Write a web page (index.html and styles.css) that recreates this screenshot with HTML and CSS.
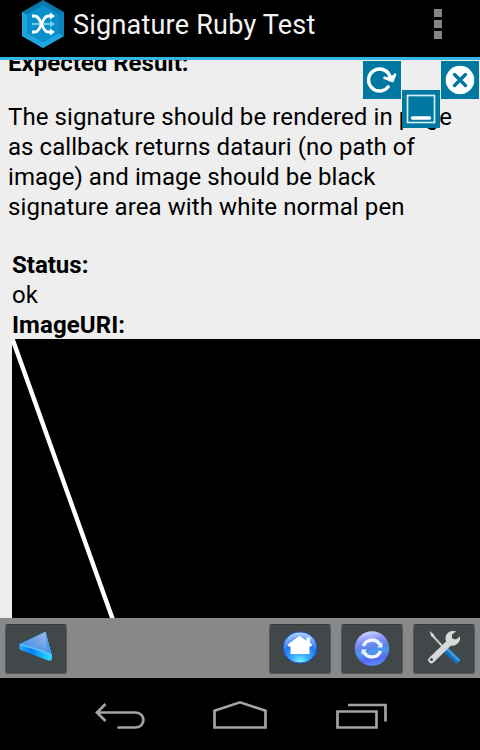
FILE: index.html
```html
<!DOCTYPE html>
<html lang="en">
<head>
<meta charset="utf-8">
<title>Signature Ruby Test</title>
<link rel="stylesheet" href="styles.css">
</head>
<body>
<div class="screen">
  <header class="action-bar">
    <svg class="app-icon" width="42" height="48" viewBox="0 0 42 48">
      <path d="M21 0L42 12V36L21 48L0 36V12Z" fill="#0878ab"/>
      <path d="M0 12L5 15V33L21 42L37 33L42 36L21 48L0 36Z" fill="#20a5df"/>
      <path d="M37 15L42 12V36L37 33Z" fill="#0b84b9"/>
      <path d="M21 5L37 14.500V33L21 42L5 33V14.500Z" fill="#0790c9"/>
      <path d="M10 24H29" stroke="#76c9e9" stroke-width="2.200"/>
      <path d="M28 20.500L33 24L28 27.500Z" fill="#76c9e9"/>
      <g fill="none" stroke="#fff" stroke-width="2.800">
        <path d="M10 16H13C19 16 20 32 26 32H30"/>
        <path d="M10 32H13C19 32 20 16 26 16H30"/>
      </g>
      <path d="M28 12.500L33 16L28 19.500ZM28 28.500L33 32L28 35.500Z" fill="#fff"/>
    </svg>
    <h1 class="title">Signature Ruby Test</h1>
    <div class="overflow"><i></i><i></i><i></i></div>
  </header>

  <main class="content">
    <div class="description">
      <div class="line bold expected">Expected Result:</div>
      <div class="line l1">The signature should be rendered in page</div>
      <div class="line l2">as callback returns datauri (no path of</div>
      <div class="line l3">image) and image should be black</div>
      <div class="line l4">signature area with white normal pen</div>
    </div>
    <div class="result">
      <div class="line bold status">Status:</div>
      <div class="line ok">ok</div>
      <div class="line bold uri">ImageURI:</div>
      <svg class="signature" width="468" height="279" viewBox="0 0 468 279">
        <rect width="468" height="279" fill="#000"/>
        <path d="M0.500 0L101 281" stroke="#fff" stroke-width="4.400"/>
      </svg>
    </div>
    <div class="float-btn refresh">
      <svg width="38" height="38" viewBox="0 0 38 38">
        <path d="M25.200 25.800A11 11 0 1 1 26.300 13.800L27.500 17" fill="none" stroke="#fff" stroke-width="3.400" stroke-linecap="round"/>
        <path d="M21.500 16.800L29.500 20L32 13.500Z" fill="#fff"/>
        <path d="M21.500 16.800L29.500 20L32 13.500" fill="none" stroke="#fff" stroke-width="2.600" stroke-linejoin="round" stroke-linecap="round"/>
      </svg>
    </div>
    <div class="float-btn close">
      <svg width="38" height="38" viewBox="0 0 38 38">
        <circle cx="19" cy="19" r="14.300" fill="#fff"/>
        <path d="M13.500 13.500L24.500 24.500M24.500 13.500L13.500 24.500" stroke="#0078a2" stroke-width="3.400" stroke-linecap="round"/>
      </svg>
    </div>
    <div class="float-btn minimize">
      <svg width="38" height="38" viewBox="0 0 38 38">
        <rect x="5.500" y="5.500" width="27" height="27" fill="none" stroke="#d5edf4" stroke-width="1.700"/>
        <path d="M10.500 28H27.500" stroke="#fff" stroke-width="3.500" stroke-linecap="round"/>
      </svg>
    </div>
  </main>

  <nav class="toolbar">
    <button class="tool back">
      <svg width="60" height="48" viewBox="0 0 60 48">
        <defs>
          <linearGradient id="face" x1="1" y1="0" x2="0" y2="1"><stop offset="0" stop-color="#b4b7ef"/><stop offset=".5" stop-color="#699fe4"/><stop offset="1" stop-color="#1289fa"/></linearGradient>
          <linearGradient id="edge"><stop offset="0" stop-color="#2baaff"/><stop offset=".35" stop-color="#087ff5"/><stop offset="1" stop-color="#25e2ff"/></linearGradient>
        </defs>
        <path d="M13.500 19L39.500 6.500L46 31L45.500 35.500L42 35.500L13.500 24.500Z" fill="url(#edge)"/>
        <path d="M14 19L39.500 7L45.500 30Z" fill="url(#face)"/>
        <path d="M39.500 7.500L45.500 30L41 28Z" fill="#249bf6" opacity=".7"/>
        <path d="M14.500 19.500L30 24L45.500 30" fill="none" stroke="#54c8ff" stroke-width="1.500"/>
      </svg>
    </button>
    <button class="tool home">
      <svg width="60" height="48" viewBox="0 0 60 48">
        <defs><radialGradient id="orb" cx=".5" cy=".95" r=".95"><stop offset="0" stop-color="#79f3ff"/><stop offset=".28" stop-color="#38acff"/><stop offset=".6" stop-color="#2474ee"/><stop offset="1" stop-color="#c2dcff"/></radialGradient></defs>
        <ellipse cx="30" cy="22.500" rx="16.800" ry="15.500" fill="url(#orb)" stroke="#1359d8"/>
        <path d="M29.500 11L42.500 19.500L41 21.500H39.500V29H20.500V21.500H18.500L17.500 19.500Z" fill="#fff"/>
        <path d="M36.500 12.500H40V19H36.500Z" fill="#fff"/>
      </svg>
    </button>
    <button class="tool">
      <svg width="60" height="48" viewBox="0 0 60 48">
        <defs><linearGradient id="sync" x1=".4" y1="0" x2=".6" y2="1"><stop offset="0" stop-color="#ccd2ff"/><stop offset=".28" stop-color="#8490f7"/><stop offset=".5" stop-color="#5484e8"/><stop offset=".6" stop-color="#4c9ceb"/><stop offset=".8" stop-color="#5468f3"/><stop offset="1" stop-color="#5a92ff"/></linearGradient></defs>
        <circle cx="30" cy="23.500" r="17.200" fill="url(#sync)"/>
        <g fill="none" stroke="#eef5ff" stroke-width="3.400"><path d="M21.500 21A9 9 0 0 1 38 20"/><path d="M38.500 26A9 9 0 0 1 22 27"/></g>
        <path d="M35 22.500H40.500V17.500ZM25 24.500H19.500V29.500Z" fill="#eef5ff"/>
      </svg>
    </button>
    <button class="tool">
      <svg width="60" height="48" viewBox="0 0 60 48">
        <path d="M17 9L31 24" stroke="#c7c9ca" stroke-width="2"/>
        <path d="M15.500 6L19.500 9L21 12.500L18 12Z" fill="#d8d8d8"/>
        <path d="M31 24L44.500 37" stroke="#166eb7" stroke-width="6"/>
        <path d="M32 23L45.500 36" stroke="#3a9be2" stroke-width="2.500"/>
        <path d="M35 18L17.500 35" stroke="#d9d9d9" stroke-width="6.500" stroke-linecap="round"/>
        <path d="M42 6.500C35 4.500 30 10 32 16L35 20.500C41 22 47 18 46 11.500L42 14.500L38 13.500L38 9.500Z" fill="#d9d9d9"/>
        <circle cx="17.500" cy="34.500" r="1.500" fill="#44494c"/>
      </svg>
    </button>
  </nav>

  <footer class="system-bar">
    <svg width="480" height="72" viewBox="0 0 480 72" fill="none" stroke="#a3a3a3" stroke-width="2.700">
      <path d="M97 34.500H135.500C146 34.500 146 49.500 135.500 49.500H117.500M105.500 26L97 34.500L105.500 43"/>
      <path d="M214.500 32.700L240 24.300L265.500 32.700V49.500H214.500Z"/>
      <path d="M337.500 33.500H376.500V49.500H337.500ZM348 27H385.500V43.500"/>
    </svg>
  </footer>
</div>
</body>
</html>
```
FILE: styles.css
```css
* { box-sizing: border-box; }
body { margin: 0; background: #000; font-family: Roboto, sans-serif; }
.screen { width: 480px; height: 750px; display: flex; flex-direction: column; overflow: hidden; }
.action-bar { height: 60px; flex: none; display: flex; align-items: flex-start; background: #000; border-bottom: 3px solid #33b5e5; padding-left: 22px; }
.app-icon { display: block; }
.title { margin: 10px 0 0 9px; flex: 1; color: #f3f3f3; font-size: 27px; line-height: 30px; font-weight: 400; letter-spacing: .22px; white-space: nowrap; }
.overflow { display: flex; flex-direction: column; gap: 3px; margin: 9px 38px 0 0; }
.overflow i { width: 8px; height: 8px; background: #858585; }
.content { position: relative; height: 558px; flex: none; background: #eee; color: #000; overflow: hidden; }
.description { padding-left: 8px; margin-top: -12px; }
.line { font-size: 24px; line-height: 30px; white-space: nowrap; }
.l1 { letter-spacing: .1px; }
.l2 { letter-spacing: .06px; }
.l3 { letter-spacing: .06px; }
.l4 { letter-spacing: .09px; }
.bold { font-weight: 700; }
.expected { margin-bottom: 24px; }
.result { padding: 28px 0 0 12px; }
.uri { height: 29px; letter-spacing: .1px; }
.signature { display: block; }
.float-btn { position: absolute; width: 38px; height: 38px; background: #0078a2; }
.float-btn svg { display: block; }
.refresh { left: 363px; top: 1px; }
.close { left: 441px; top: 1px; }
.minimize { left: 402px; top: 30px; }
.toolbar { height: 60px; flex: none; display: flex; gap: 10px; padding: 6px 5px; background: #888; }
.tool { width: 62px; height: 50px; padding: 0; border: 1px solid #54585a; border-top-color: #363a3c; border-radius: 3px; background: #42474a; }
.tool svg { display: block; }
.back { margin-right: auto; }
.system-bar { height: 72px; flex: none; background: #000; }
.system-bar svg { display: block; }
```
